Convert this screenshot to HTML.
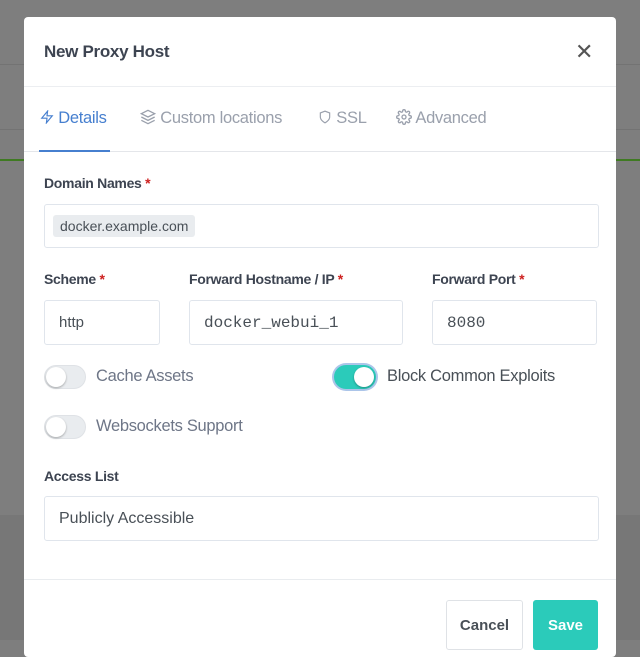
<!DOCTYPE html>
<html><head><style>
*{box-sizing:border-box;margin:0;padding:0}
body{width:640px;height:640px;overflow:hidden;background:#7e7e7e;font-family:"Liberation Sans",sans-serif;position:relative;color:#495057}
.bg1{position:absolute;left:0;top:64px;width:640px;height:1px;background:#737373}
.bg2{position:absolute;left:0;top:129px;width:640px;height:1px;background:#737373}
.bg3{position:absolute;left:0;top:159px;width:640px;height:2px;background:#3f7a22}
.bg4{position:absolute;left:0;top:515px;width:640px;height:125px;background:#777}
.m{position:absolute;left:24px;top:17px;width:592px;height:640px;background:#fff;border-radius:4px}
.t{position:absolute;left:20px;top:25px;font-size:17px;font-weight:bold;color:#3d4451;letter-spacing:-.3px}
.x{position:absolute;left:551px;top:22px;font-size:22px;color:#555}
.hl{position:absolute;left:0;top:69px;width:592px;height:1px;background:#eceef1}
.tabs{position:absolute;left:16px;top:92px;font-size:16.5px;color:#9aa0ac;letter-spacing:-.3px}
.tabs span{position:absolute;white-space:nowrap;top:0}
.tl{position:absolute;left:0;top:134px;width:592px;height:1px;background:#e4e6ea}
.ul{position:absolute;left:15px;top:133px;width:71px;height:2px;background:#467fcf}
.lb{position:absolute;font-size:14px;font-weight:bold;color:#3d4451;letter-spacing:-.3px}
.lb i{color:#cd201f;font-style:normal}
.in{position:absolute;border:1px solid #e0e5ec;border-radius:3px;font-size:15px;color:#495057;padding-left:14px;display:flex;align-items:center}
.sw{position:absolute;width:42px;height:24px;border-radius:12px;background:#e9ecef;border:1px solid #dfe2e6}
.sw b{position:absolute;left:1px;top:1px;width:20px;height:20px;border-radius:50%;background:#fff;box-shadow:0 1px 2px rgba(0,0,0,.3)}
.sl{position:absolute;font-size:16.5px;color:#6e7687;letter-spacing:-.3px}
.btn{position:absolute;border-radius:3px;font-size:15px;font-weight:bold;display:flex;align-items:center;justify-content:center}
</style></head><body>
<div class="bg1"></div><div class="bg2"></div><div class="bg3"></div><div class="bg4"></div>
<div class="m">
<div class="t">New Proxy Host</div>
<div class="x">✕</div>
<div class="hl"></div>
<div class="tabs">
<span style="left:0;color:#467fcf"><svg width="14" height="14" viewBox="0 0 24 24" fill="none" stroke="#467fcf" stroke-width="2" style="vertical-align:-1px"><path d="M13 2L3 14h9l-1 8 10-12h-9l1-8z"/></svg> Details</span>
<span style="left:100px"><svg width="16" height="16" viewBox="0 0 24 24" fill="none" stroke="#9aa0ac" stroke-width="2" style="vertical-align:-2px"><path d="M12 2L2 7l10 5 10-5-10-5zM2 17l10 5 10-5M2 12l10 5 10-5"/></svg> Custom locations</span>
<span style="left:278px"><svg width="14" height="16" viewBox="0 0 24 24" fill="none" stroke="#9aa0ac" stroke-width="2" style="vertical-align:-2px"><path d="M12 22s8-4 8-10V5l-8-3-8 3v7c0 6 8 10 8 10z"/></svg> SSL</span>
<span style="left:356px"><svg width="16" height="16" viewBox="0 0 24 24" fill="none" stroke="#9aa0ac" stroke-width="2" style="vertical-align:-2px"><circle cx="12" cy="12" r="3"/><path d="M19.4 15a1.7 1.7 0 00.3 1.8l.1.1a2 2 0 11-2.8 2.8l-.1-.1a1.7 1.7 0 00-1.8-.3 1.7 1.7 0 00-1 1.5V21a2 2 0 11-4 0v-.1a1.7 1.7 0 00-1.1-1.5 1.7 1.7 0 00-1.8.3l-.1.1a2 2 0 11-2.8-2.8l.1-.1a1.7 1.7 0 00.3-1.8 1.7 1.7 0 00-1.5-1H3a2 2 0 110-4h.1a1.7 1.7 0 001.5-1.1 1.7 1.7 0 00-.3-1.8l-.1-.1a2 2 0 112.8-2.8l.1.1a1.7 1.7 0 001.8.3H9a1.7 1.7 0 001-1.5V3a2 2 0 114 0v.1a1.7 1.7 0 001 1.5 1.7 1.7 0 001.8-.3l.1-.1a2 2 0 112.8 2.8l-.1.1a1.7 1.7 0 00-.3 1.8V9a1.7 1.7 0 001.5 1H21a2 2 0 110 4h-.1a1.7 1.7 0 00-1.5 1z"/></svg> Advanced</span>
</div>
<div class="tl"></div><div class="ul"></div>
<div class="lb" style="left:20px;top:158px">Domain Names <i>*</i></div>
<div class="in" style="left:20px;top:187px;width:555px;height:44px;padding-left:8px"><span style="background:#e9ecef;border-radius:3px;padding:3px 7px;font-size:14px">docker.example.com</span></div>
<div class="lb" style="left:20px;top:254px">Scheme <i>*</i></div>
<div class="lb" style="left:165px;top:254px">Forward Hostname / IP <i>*</i></div>
<div class="lb" style="left:408px;top:254px">Forward Port <i>*</i></div>
<div class="in" style="left:20px;top:283px;width:116px;height:45px">http</div>
<div class="in" style="left:165px;top:283px;width:214px;height:45px;font-family:'Liberation Mono',monospace;font-size:16px">docker_webui_1</div>
<div class="in" style="left:408px;top:283px;width:165px;height:45px;font-family:'Liberation Mono',monospace;font-size:16px">8080</div>
<div class="sw" style="left:20px;top:348px"><b></b></div>
<div class="sl" style="left:72px;top:350px">Cache Assets</div>
<div class="sw" style="left:310px;top:348px;background:#2bcbba;border-color:#2bcbba;box-shadow:0 0 0 2px rgba(70,127,207,.45)"><b style="left:19px"></b></div>
<div class="sl" style="left:363px;top:350px;color:#495057">Block Common Exploits</div>
<div class="sw" style="left:20px;top:398px"><b></b></div>
<div class="sl" style="left:72px;top:400px">Websockets Support</div>
<div class="lb" style="left:20px;top:451px">Access List</div>
<div class="in" style="left:20px;top:479px;width:555px;height:45px;font-size:16px">Publicly Accessible</div>
<div style="position:absolute;left:0;top:562px;width:592px;height:1px;background:#e9ecef"></div>
<div class="btn" style="left:422px;top:583px;width:77px;height:50px;border:1px solid #dfe2e6;color:#495057">Cancel</div>
<div class="btn" style="left:509px;top:583px;width:65px;height:50px;background:#2bcbba;color:#fff">Save</div>
</div>
</body></html>
